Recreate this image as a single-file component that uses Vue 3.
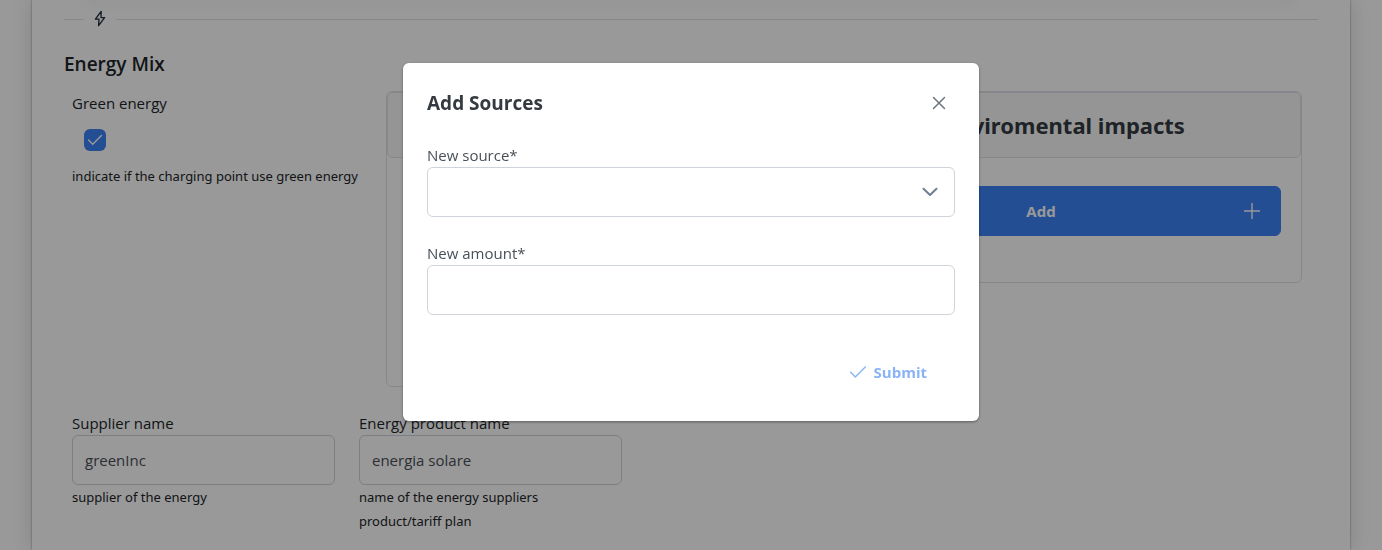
<script setup>
import { ref } from 'vue'

const greenEnergy = ref(true)
const supplier = ref('greenInc')
const product = ref('energia solare')
const source = ref('')
const amount = ref('')
</script>

<template>
  <div class="page">
    <main class="sheet">
      <div class="previous"></div>
      <div class="divider">
        <span class="divider-icon">
          <svg width="16" height="16" viewBox="0 0 16 16" fill="none" stroke="currentColor" stroke-width="1.3" stroke-linejoin="round">
            <path d="M9.200 .3 3.400 8.200h3.600L6.600 14.600l6-8H9z" />
          </svg>
        </span>
      </div>

      <h3 class="section-title">Energy Mix</h3>

      <section class="mix">
        <div class="green">
          <label for="green" class="label">Green energy</label>
          <span class="check">
            <input id="green" v-model="greenEnergy" type="checkbox" />
            <svg v-if="greenEnergy" class="tick" width="22" height="22" viewBox="0 0 22 22" fill="none" stroke="currentColor" stroke-width="1.4" stroke-linecap="round" stroke-linejoin="round">
              <path d="M4.500 11 8.700 15.300 17.500 6.500" />
            </svg>
          </span>
          <small class="hint">indicate if the charging point use green energy</small>
        </div>

        <div class="panels">
          <article class="panel tall">
            <header class="panel-head"><h2>Sources</h2></header>
            <div class="panel-body">
              <button type="button" class="add">
                <span>Add</span>
                <svg width="16" height="16" viewBox="0 0 16 16" stroke="currentColor" stroke-width="1.4"><path d="M8 0v16M0 8h16" /></svg>
              </button>
            </div>
          </article>
          <article class="panel">
            <header class="panel-head wide"><h2>Enviromental impacts</h2></header>
            <div class="panel-body">
              <button type="button" class="add">
                <span>Add</span>
                <svg width="16" height="16" viewBox="0 0 16 16" stroke="currentColor" stroke-width="1.4"><path d="M8 0v16M0 8h16" /></svg>
              </button>
            </div>
          </article>
        </div>
      </section>

      <section class="fields">
        <div>
          <label for="supplier" class="label">Supplier name</label>
          <input id="supplier" v-model="supplier" class="control" type="text" />
          <small class="hint">supplier of the energy</small>
        </div>
        <div>
          <label for="product" class="label">Energy product name</label>
          <input id="product" v-model="product" class="control" type="text" />
          <small class="hint">name of the energy suppliers product/tariff plan</small>
        </div>
      </section>
    </main>

    <div class="mask">
      <form class="dialog" role="dialog" aria-labelledby="dialog-title" @submit.prevent>
        <header class="dialog-head">
          <h2 id="dialog-title">Add Sources</h2>
          <button type="button" class="close" aria-label="Close">
            <svg width="14" height="14" viewBox="0 0 14 14" stroke="currentColor" stroke-width="1.5" stroke-linecap="round"><path d="M1.5 1.5l11 11M12.5 1.5l-11 11" /></svg>
          </button>
        </header>
        <div class="dialog-field">
          <label for="source" class="label">New source*</label>
          <div class="select-wrap">
            <select id="source" v-model="source" class="control"><option value=""></option></select>
            <svg class="chevron" width="16" height="16" viewBox="0 0 16 16" fill="none" stroke="currentColor" stroke-width="2" stroke-linecap="round" stroke-linejoin="round"><path d="M1.500 4.800 8 11l6.500-6.200" /></svg>
          </div>
        </div>
        <div class="dialog-field">
          <label for="amount" class="label">New amount*</label>
          <input id="amount" v-model="amount" class="control" type="text" />
        </div>
        <footer class="dialog-foot">
          <button type="submit" class="submit" disabled>
            <svg width="16" height="16" viewBox="0 0 16 16" fill="none" stroke="currentColor" stroke-width="1.4" stroke-linecap="round" stroke-linejoin="round"><path d="M.7 8.200 5.300 13 15.300 3" /></svg>
            <span>Submit</span>
          </button>
        </footer>
      </form>
    </div>
  </div>
</template>

<style>
body {
  margin: 0;
  overflow: hidden;
}
</style>

<style scoped>
* {
  box-sizing: border-box;
}
.page {
  min-height: 100vh;
  padding: 0 32px;
  background: #fff;
  color: #212529;
  font-family: "Open Sans", sans-serif;
  font-size: 15px;
  line-height: 24px;
}
h2,
h3 {
  margin: 0;
}
button,
input,
select {
  font: inherit;
  margin: 0;
}
.panel-head h2,
.hint {
  font-family: "Noto Sans", sans-serif;
}
svg {
  display: block;
  flex: none;
}
.sheet {
  min-height: 100vh;
  padding: 0 32px 16px;
  box-shadow: 0 0 2px rgba(0, 0, 0, 0.4), 0 0 20px rgba(0, 0, 0, 0.14);
}
.previous {
  margin: 0 24px;
  box-shadow: 0 0 14px 1px rgba(0, 0, 0, 0.2);
}
.divider {
  display: flex;
  align-items: center;
  height: 38px;
}
.divider::before,
.divider::after {
  content: "";
  width: 20px;
  border-top: 1px solid #dee2e6;
}
.divider::after {
  flex: 1;
}
.divider-icon {
  padding: 0 8px;
  color: #1f2d3d;
}
.section-title {
  margin: 14px 0 15px;
  font-size: 19px;
  font-weight: 600;
}
.mix {
  display: grid;
  grid-template-columns: 314px 1fr;
  padding: 0 16px 0 8px;
}
.label,
.hint {
  display: block;
}
.hint {
  font-size: 13px;
  padding-right: 12px;
}
.check {
  position: relative;
  display: block;
  width: 22px;
  height: 22px;
  margin: 14px 12px 13px;
}
.check input {
  display: block;
  width: 22px;
  height: 22px;
  appearance: none;
  border-radius: 6px;
  background: #3b82f6;
}
.tick {
  position: absolute;
  inset: 0;
  color: #fff;
  pointer-events: none;
}
.panels {
  display: grid;
  grid-template-columns: 394fr 498fr;
  gap: 24px;
  align-items: start;
}
.panel {
  border: 1px solid #dee2e6;
  border-radius: 6px;
}
.tall {
  min-height: 296px;
}
.panel-head {
  padding: 20px;
  border: 1px solid #dee2e6;
  border-radius: 6px;
  background: #f8f9fa;
  text-align: center;
}
.wide {
  padding-left: 44px;
}
.panel-head h2 {
  font-size: 22px;
  line-height: 24px;
  color: #343a40;
}
.panel-body {
  padding: 28px 20px 46px;
}
.add {
  display: flex;
  align-items: center;
  gap: 8px;
  width: 100%;
  height: 50px;
  padding: 0 20px;
  border: 1px solid #3b82f6;
  border-radius: 6px;
  background: #3b82f6;
  color: #fff;
  font-weight: 700;
}
.add span {
  flex: 1;
}
.fields {
  display: grid;
  grid-template-columns: repeat(4, 1fr);
  gap: 24px;
  max-width: 1132px;
  padding-left: 8px;
  margin-top: 24px;
}
.fields .hint {
  padding-right: 24px;
}
.control {
  display: block;
  width: 100%;
  height: 50px;
  padding: 0 12px;
  appearance: none;
  border: 1px solid #ced4da;
  border-radius: 6px;
  background: #fff;
  color: #495057;
  outline: none;
}
.mask {
  position: fixed;
  inset: 0;
  display: flex;
  justify-content: center;
  align-items: flex-start;
  padding-top: 63px;
  background: rgba(0, 0, 0, 0.4);
}
.dialog {
  width: 100%;
  max-width: 576px;
  padding: 24px;
  border-radius: 6px;
  background: #fff;
  color: #495057;
  box-shadow: 0 1px 3px rgba(0, 0, 0, 0.4);
}
.dialog-head {
  display: flex;
  justify-content: space-between;
  align-items: center;
  height: 32px;
}
.dialog-head h2 {
  font-size: 19px;
  color: #343a40;
}
.close {
  display: grid;
  place-items: center;
  width: 32px;
  height: 32px;
  padding: 0;
  border: 0;
  background: none;
  color: #6c757d;
}
.dialog-field {
  margin-top: 24px;
}
.select-wrap {
  position: relative;
}
.chevron {
  position: absolute;
  top: 17px;
  right: 17px;
  color: #6c7f93;
  pointer-events: none;
}
.dialog-foot {
  display: flex;
  justify-content: flex-end;
  margin-top: 32px;
}
.submit {
  display: flex;
  align-items: center;
  gap: 8px;
  height: 50px;
  padding: 0 28px 0 20px;
  border: 0;
  background: none;
  color: #3b82f6;
  font-weight: 700;
  opacity: 0.6;
}
</style>
